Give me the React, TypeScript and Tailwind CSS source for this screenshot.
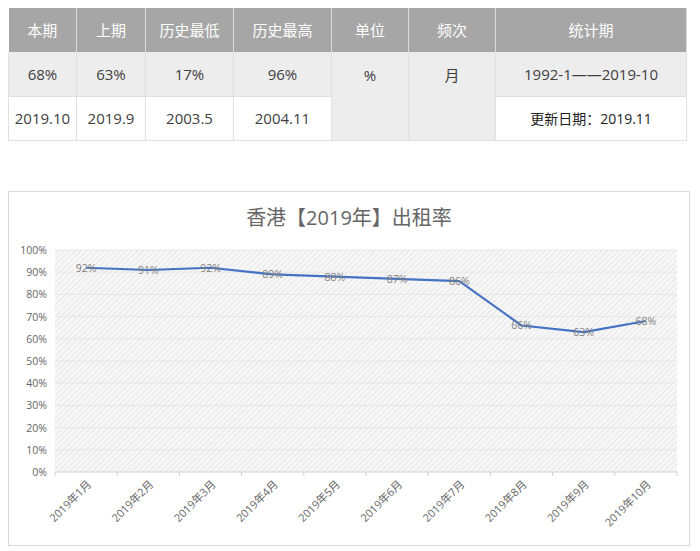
const font = { fontFamily: '"Open Sans", "Noto Sans CJK SC", sans-serif' };

const data = [92, 91, 92, 89, 88, 87, 86, 66, 63, 68];

function Chart() {
  const x0 = 46, x1 = 668, yTop = 58, yBot = 280;
  const cw = (x1 - x0) / 10;
  const px = (i: number) => x0 + cw * (i + 0.5);
  const py = (v: number) => yBot - ((yBot - yTop) * v) / 100;
  const pts = data.map((v, i) => `${px(i)},${py(v)}`).join(' ');
  return (
    <svg width="680" height="353" viewBox="0 0 680 353" className="block">
      <defs>
        <pattern id="hatch" width="4" height="4" patternUnits="userSpaceOnUse" patternTransform="rotate(45)">
          <rect width="4" height="4" fill="#f7f7f7" />
          <line x1="0" y1="0" x2="0" y2="4" stroke="#dcdcdc" strokeWidth="1.2" />
        </pattern>
      </defs>
      <text x="340" y="33" textAnchor="middle" fontSize="20" fill="#666" style={font}>香港【2019年】出租率</text>
      <rect x={x0} y={yTop} width={x1 - x0} height={yBot - yTop} fill="url(#hatch)" />
      {Array.from({ length: 11 }, (_, k) => (
        <g key={k}>
          <line x1={x0} x2={x1} y1={py(k * 10)} y2={py(k * 10)} stroke={k === 0 ? '#d0d0d0' : '#e6e6e6'} />
          <text x={x0 - 8} y={py(k * 10) + 4} textAnchor="end" fontSize="10.5" fill="#666" style={font}>{k * 10}%</text>
        </g>
      ))}
      {Array.from({ length: 11 }, (_, i) => (
        <line key={i} x1={x0 + cw * i} x2={x0 + cw * i} y1={yBot} y2={yBot + 4} stroke="#d0d0d0" />
      ))}
      <polyline points={pts} fill="none" stroke="#4472c4" strokeWidth="2.2" strokeLinejoin="round" />
      {data.map((v, i) => (
        <text key={i} x={px(i)} y={py(v) + 4} textAnchor="middle" fontSize="10.5" fill="#7f7f7f" style={font}>{v}%</text>
      ))}
      {data.map((_, i) => (
        <text key={i} x={px(i) + 6} y={yBot + 13} textAnchor="end" fontSize="11" fill="#666" transform={`rotate(-45 ${px(i) + 6} ${yBot + 13})`} style={font}>
          2019年{i + 1}月
        </text>
      ))}
    </svg>
  );
}

export default function App() {
  const th = "bg-[#a6a6a6] text-white font-normal border-r border-white/60";
  const td = "border-r border-b border-[#e0e0e0] text-center";
  return (
    <div className="w-[700px] h-[551px] bg-white text-[#404040] text-[15px]" style={font}>
      <table className="ml-2 mt-2 border-collapse table-fixed w-[678px]">
        <colgroup>
          <col className="w-[68px]" /><col className="w-[69px]" /><col className="w-[88px]" /><col className="w-[98px]" />
          <col className="w-[77px]" /><col className="w-[87px]" /><col className="w-[191px]" />
        </colgroup>
        <thead>
          <tr className="h-[44px]">
            {['本期', '上期', '历史最低', '历史最高', '单位', '频次', '统计期'].map(h => (
              <th key={h} className={th}>{h}</th>
            ))}
          </tr>
        </thead>
        <tbody>
          <tr className="h-[44px] bg-[#ededed]">
            <td className={td + " border-l"}>68%</td>
            <td className={td}>63%</td>
            <td className={td}>17%</td>
            <td className={td}>96%</td>
            <td rowSpan={2} className={td + " align-top pt-3 bg-[#ededed]"}>%</td>
            <td rowSpan={2} className={td + " align-top pt-3 bg-[#ededed]"}>月</td>
            <td className={td}>1992-1——2019-10</td>
          </tr>
          <tr className="h-[44px] bg-white">
            <td className={td + " border-l"}>2019.10</td>
            <td className={td}>2019.9</td>
            <td className={td}>2003.5</td>
            <td className={td}>2004.11</td>
            <td className={td + " text-[14px] text-[#222]"}>更新日期：2019.11</td>
          </tr>
        </tbody>
      </table>
      <div className="ml-2 mt-[50px] w-[682px] h-[355px] border border-[#d9d9d9]">
        <Chart />
      </div>
    </div>
  );
}
